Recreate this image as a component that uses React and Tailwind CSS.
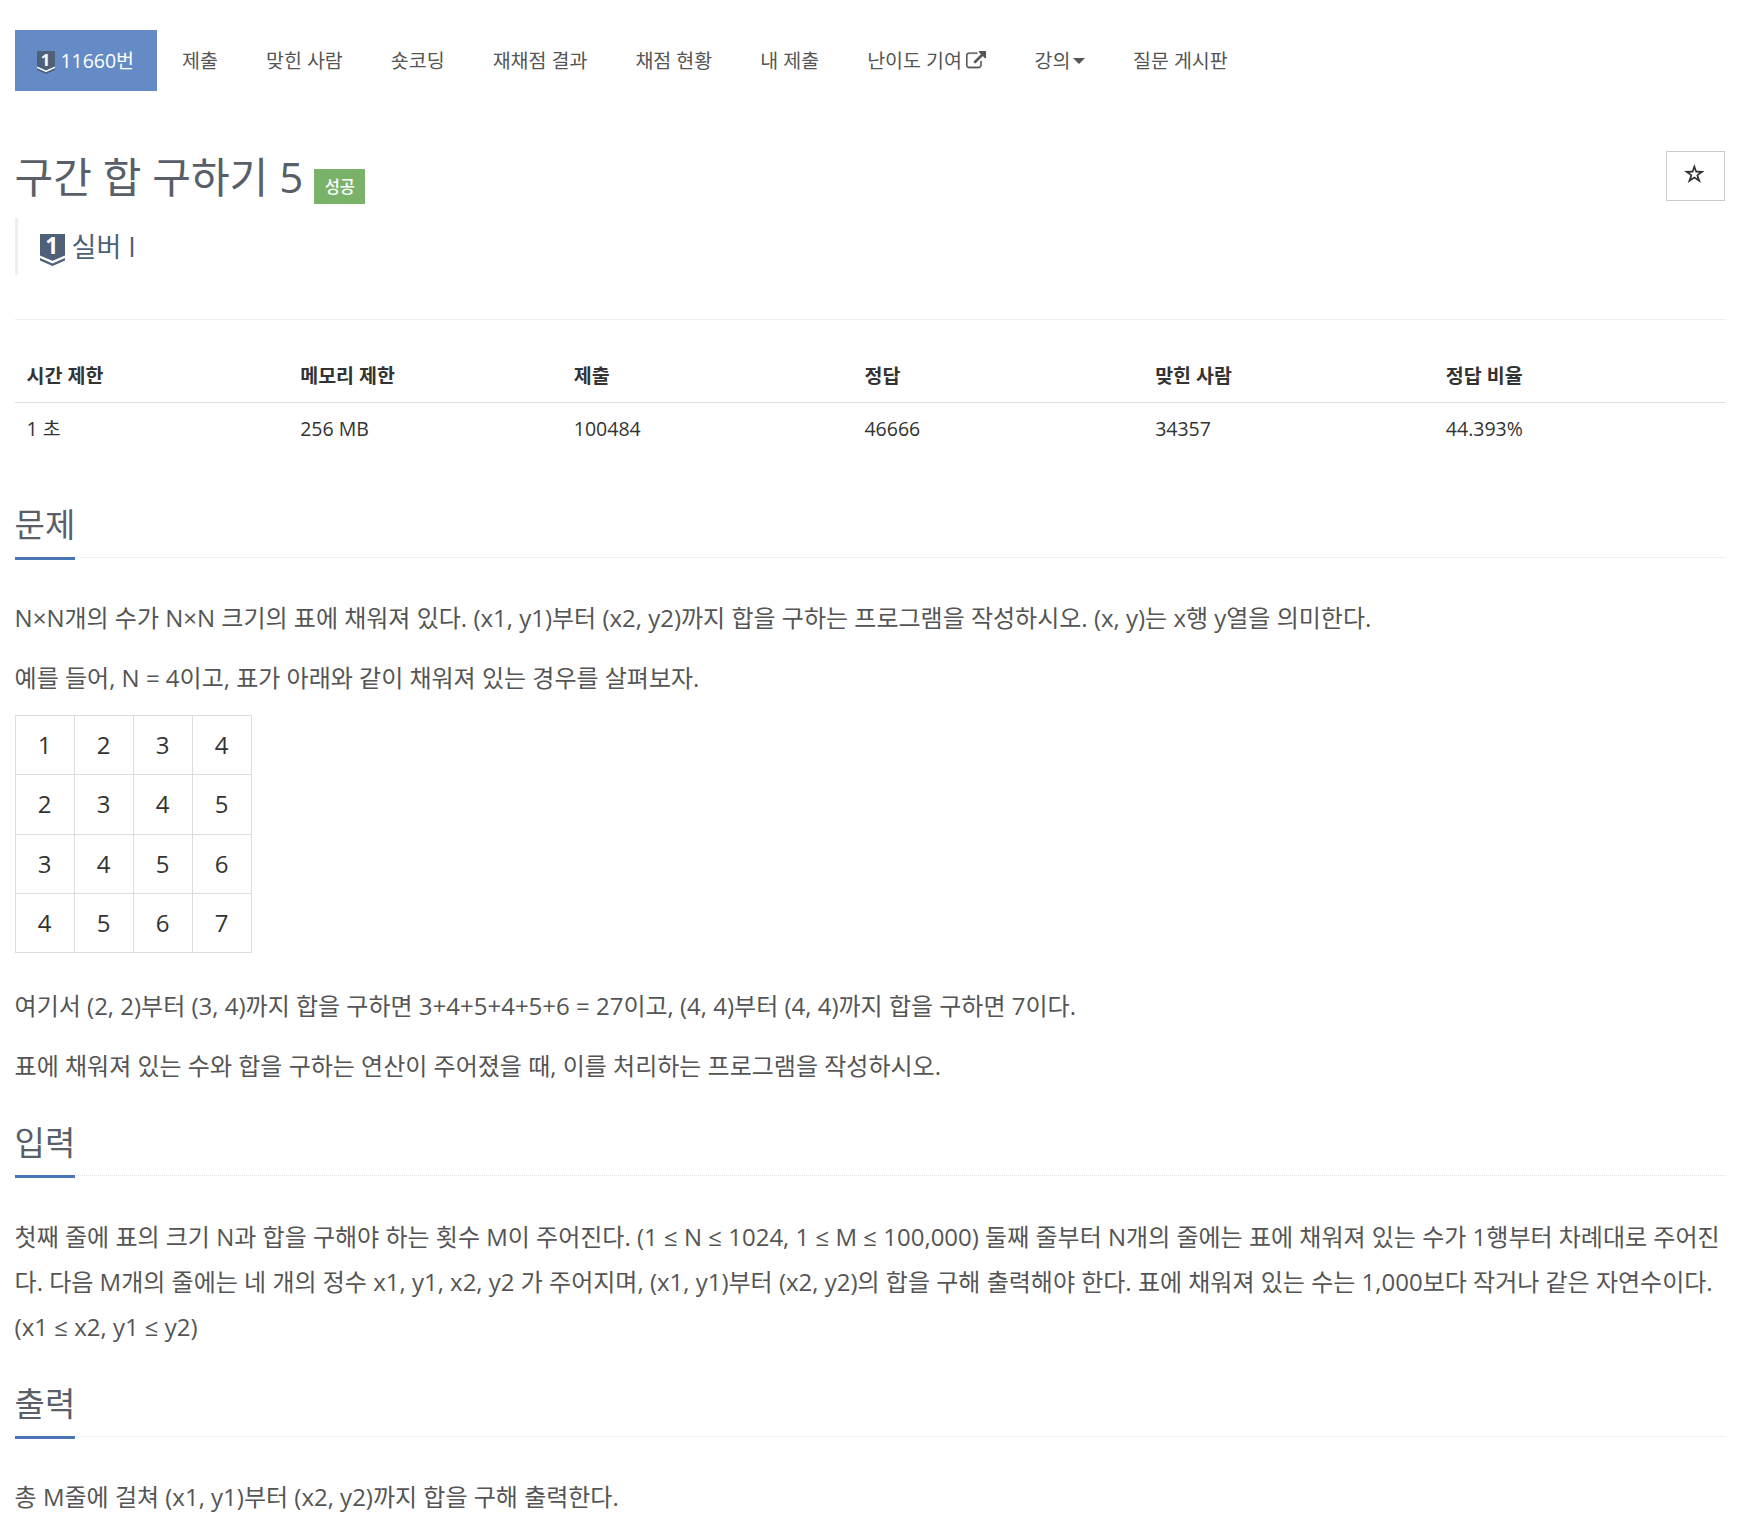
const TABS = [
    {name: "제출"},
    {name: "맞힌 사람"},
    {name: "숏코딩"},
    {name: "재채점 결과"},
    {name: "채점 현황"},
    {name: "내 제출"},
    {name: "난이도 기여", external: true},
    {name: "강의", dropdown: true},
    {name: "질문 게시판"},
]

const INFO = [
    {title: "시간 제한", value: "1 초", width: "w-[16%]"},
    {title: "메모리 제한", value: "256 MB", width: "w-[16%]"},
    {title: "제출", value: "100484", width: "w-[17%]"},
    {title: "정답", value: "46666", width: "w-[17%]"},
    {title: "맞힌 사람", value: "34357", width: "w-[17%]"},
    {title: "정답 비율", value: "44.393%", width: "w-[17%]"},
]

const GRID = [
    {height: "h-[59px]", cells: [1, 2, 3, 4]},
    {height: "h-[60px]", cells: [2, 3, 4, 5]},
    {height: "h-[59px]", cells: [3, 4, 5, 6]},
    {height: "h-[59px]", cells: [4, 5, 6, 7]},
]

function TierIcon(props) {
    return (
        <svg viewBox="0 0 25 32" className={`shrink-0 overflow-visible ${props.className}`}>
            <path d="M0 0H25V22L12.5 27L0 22Z" fill="#4f6079"/>
            <path d="M0 21.6L12.5 27L25 21.6V24L12.5 29.4L0 24Z" fill="#fff"/>
            <path d="M0 24L12.5 29.4L25 24V26.6L12.5 32L0 26.6Z" fill="#4f6079"/>
            <text x="11.8" y="20.2" textAnchor="middle" fontSize="23" fontWeight="700" fill="#fff" className="font-['Open_Sans']">1</text>
        </svg>
    )
}

function ExternalIcon() {
    return (
        <svg viewBox="0 0 1792 1792" className="ml-[4.6px] inline-block size-[20px] align-[-3px]" fill="currentColor">
            <path d="M1408 928v320q0 119-84.5 203.5t-203.5 84.5h-832q-119 0-203.5-84.5t-84.5-203.5v-832q0-119 84.5-203.5t203.5-84.5h704q14 0 23 9t9 23v64q0 14-9 23t-23 9h-704q-66 0-113 47t-47 113v832q0 66 47 113t113 47h832q66 0 113-47t47-113v-320q0-14 9-23t23-9h64q14 0 23 9t9 23zm384-864v512q0 26-19 45t-45 19-45-19l-176-176-652 652q-10 10-23 10t-23-10l-114-114q-10-10-10-23t10-23l652-652-176-176q-19-19-19-45t19-45 45-19h512q26 0 45 19t19 45z" stroke="currentColor" strokeWidth="24"/>
        </svg>
    )
}

function StarIcon() {
    return (
        <svg viewBox="0 0 20.7 19" className="h-[19px] w-[20.7px]" fill="#333" fillRule="evenodd">
            <path d="M10.35 0L12.7 6.8L20.7 7L14.3 11.6L17 19L10.35 14.6L3.7 19L6.4 11.6L0 7L8 6.8ZM10.35 5.2L11.6 8.5L15.3 8.7L12.4 11L13.4 14.4L10.35 12.4L7.3 14.4L8.3 11L5.4 8.7L9.1 8.5Z"/>
        </svg>
    )
}

function Section(props) {
    return (
        <section>
            <div className="flex h-[54px] border-b border-dotted border-[#dfe3e8]">
                <h2 className="h-[56px] w-[60px] border-b-3 border-[#4a75b9] text-[33px] leading-[42px] whitespace-nowrap text-[#585f69]">{props.title}</h2>
            </div>
            <div className="pt-[37px] text-[24px] leading-[45.6px] text-[#555]">{props.children}</div>
        </section>
    )
}

export default function App() {
    return (
        <div className="h-[1522px] overflow-hidden bg-white px-[14.6px] pt-[30px] font-['Open_Sans','Noto_Sans_CJK_KR',sans-serif] text-[19.5px] leading-[31.2px] text-[#333]">
            <nav className="flex gap-[3px] text-[#555]">
                <a className="flex h-[61px] w-[142px] items-center bg-[#658bc6] pl-[22.4px] text-white">
                    <TierIcon className="mt-[21px] mr-[5.4px] h-[23px] w-[18px] self-start"/>
                    11660번
                </a>
                {TABS.map(tab => (
                    <a key={tab.name} className="px-[22.5px] py-[15px] whitespace-nowrap">
                        {tab.name}
                        {tab.external && <ExternalIcon/>}
                        {tab.dropdown && <span className="ml-[2.6px] inline-block border-x-6 border-t-6 border-x-transparent border-t-[#555] align-[4px]"/>}
                    </a>
                ))}
            </nav>

            <header className="mt-[60px] flex h-[169px] items-start justify-between border-b border-[#eee]">
                <div>
                    <div className="flex">
                        <h1 className="text-[42px] leading-[52px] text-[#585f69]">구간 합 구하기 5</h1>
                        <span className="mt-[18px] ml-[10.5px] h-[35px] bg-[#7bb26a] pr-[10px] pl-[11px] text-[16.5px] leading-[35px] font-medium text-white">성공</span>
                    </div>
                    <blockquote className="mt-[14px] flex h-[57px] border-l-3 border-[#eee] pl-[22px] text-[27px] leading-[57px] text-[#4f6079]">
                        <TierIcon className="mt-[16px] mr-[7px] h-[32px] w-[25px]"/>
                        실버 I
                    </blockquote>
                </div>
                <button className="flex h-[50px] w-[59px] justify-center border border-[#ccc] pt-[12px] pr-[4px]">
                    <StarIcon/>
                </button>
            </header>

            <table className="mt-[30px] w-[1710px] table-fixed text-left">
                <thead>
                    <tr className="border-b border-[#ddd]">
                        {INFO.map(col => <th key={col.title} className={`h-[52px] px-[12px] font-bold ${col.width}`}>{col.title}</th>)}
                    </tr>
                </thead>
                <tbody>
                    <tr>
                        {INFO.map(col => <td key={col.title} className="h-[54px] px-[12px] pb-[2px]">{col.value}</td>)}
                    </tr>
                </tbody>
            </table>

            <div className="mt-[48px]">
                <Section title="문제">
                    <p className="mb-[14.4px]">N×N개의 수가 N×N 크기의 표에 채워져 있다. (x1, y1)부터 (x2, y2)까지 합을 구하는 프로그램을 작성하시오. (x, y)는 x행 y열을 의미한다.</p>
                    <p className="mb-[14.4px]">예를 들어, N = 4이고, 표가 아래와 같이 채워져 있는 경우를 살펴보자.</p>
                    <table className="w-[237px] table-fixed border-separate border-spacing-0 border-t border-l border-[#ddd] text-center leading-[57px] text-[#333]">
                        <tbody>
                            {GRID.map((row, i) => (
                                <tr key={i}>
                                    {row.cells.map(n => <td key={n} className={`border-r border-b border-[#ddd] align-top ${row.height}`}>{n}</td>)}
                                </tr>
                            ))}
                        </tbody>
                    </table>
                    <p className="mt-[30px] mb-[14.4px]">여기서 (2, 2)부터 (3, 4)까지 합을 구하면 3+4+5+4+5+6 = 27이고, (4, 4)부터 (4, 4)까지 합을 구하면 7이다.</p>
                    <p className="mb-[33.4px]">표에 채워져 있는 수와 합을 구하는 연산이 주어졌을 때, 이를 처리하는 프로그램을 작성하시오.</p>
                </Section>
                <Section title="입력">
                    <p className="mt-[0.55px] mb-[33.55px] leading-[45.3px]">첫째 줄에 표의 크기 N과 합을 구해야 하는 횟수 M이 주어진다. (1 ≤ N ≤ 1024, 1 ≤ M ≤ 100,000) 둘째 줄부터 N개의 줄에는 표에 채워져 있는 수가 1행부터 차례대로 주어진다. 다음 M개의 줄에는 네 개의 정수 x1, y1, x2, y2 가 주어지며, (x1, y1)부터 (x2, y2)의 합을 구해 출력해야 한다. 표에 채워져 있는 수는 1,000보다 작거나 같은 자연수이다. (x1 ≤ x2, y1 ≤ y2)</p>
                </Section>
                <Section title="출력">
                    <p>총 M줄에 걸쳐 (x1, y1)부터 (x2, y2)까지 합을 구해 출력한다.</p>
                </Section>
            </div>
        </div>
    )
}
